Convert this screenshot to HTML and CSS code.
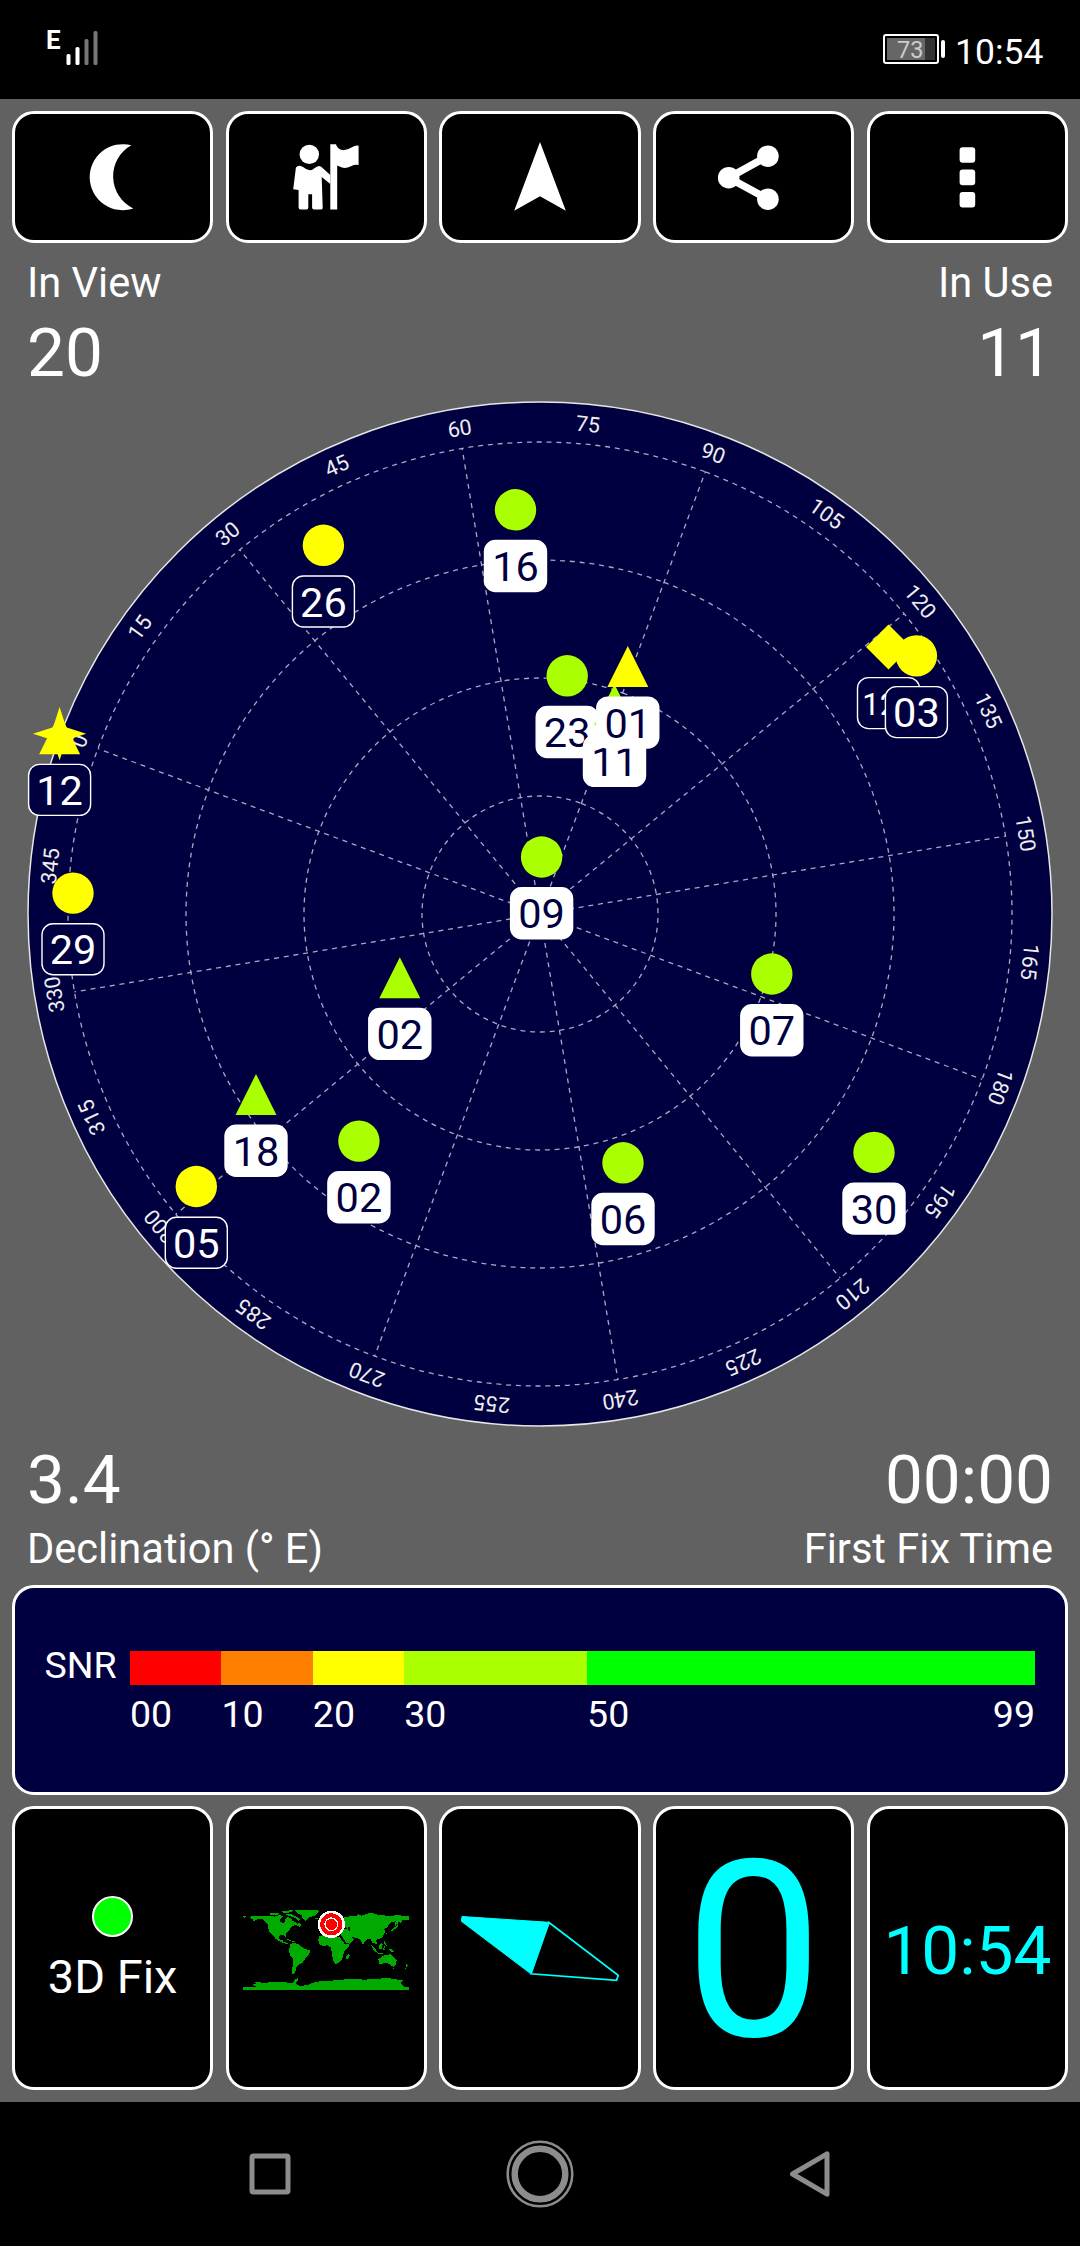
FILE: index.html
```html
<!DOCTYPE html>
<html lang="en">
<head>
  <meta charset="UTF-8">
  <meta name="viewport" content="width=device-width, initial-scale=1.0">
  <title>GPS Status</title>
  <link rel="stylesheet" href="styles.css">
</head>
<body>
  <div class="status-bar">
    <div class="network">
      <span class="network-type">E</span>
      <svg class="signal" width="32" height="36" viewBox="0 0 32 36">
        <rect x="0.5" y="23" width="4" height="11" rx="1.5" />
        <rect x="9.5" y="16" width="4" height="18" rx="1.5" />
        <rect class="off" x="18.5" y="8" width="4" height="26" rx="1.5" />
        <rect class="off" x="27.5" y="0" width="4" height="34" rx="1.5" />
      </svg>
    </div>
    <div class="system">
      <div class="battery"><span class="battery-level">73</span></div>
      <div class="battery-tip"></div>
      <span class="clock">10:54</span>
    </div>
  </div>

  <main class="app">
    <div class="toolbar">
      <button class="card">
        <svg class="icon" viewBox="0 0 80 80"><path d="M58.3 8.3 A33 33 0 1 0 60.3 71.4 A35.6 35.6 0 0 1 58.3 8.3Z" /></svg>
      </button>
      <button class="card">
        <svg class="icon" viewBox="0 0 80 80">
          <circle cx="23.3" cy="17.4" r="9.7" />
          <path d="M12 28.9 Q15 28.3 17.5 30.3 Q23.7 36 29.5 30.5 Q33.5 27.5 36 30.5 L44.3 37.9 V46.9 L35.7 39.9 L36.7 71 Q36.7 72.4 35 72.4 H28 Q26.1 72.4 26.1 70.5 V57.2 H22.3 V70.5 Q22.3 72.4 20.5 72.4 H14.5 Q12.6 72.4 12.6 70.5 V53 L7.2 52.3 L9.9 30.5Z" />
          <path d="M44.3 7.2 H50 Q51.2 12 56 13 Q60 13.8 66 10.2 Q69.5 8 72.6 8.8 V28 Q69 27.2 65 29.2 Q60 31.8 56 30.6 L51.2 28.4 V72.6 H44.3Z" />
        </svg>
      </button>
      <button class="card">
        <svg class="icon" viewBox="0 0 80 80"><path d="M40 5 L65.8 73.7 L40 59.3 L14.2 73.7Z" /></svg>
      </button>
      <button class="card">
        <svg class="icon" viewBox="0 0 80 80">
          <circle cx="53.9" cy="19.2" r="10.8" />
          <circle cx="14.7" cy="40.7" r="10.8" />
          <circle cx="53.9" cy="62.2" r="10.8" />
          <path class="share-line" d="M53.9 19.2 L14.7 40.7 L53.9 62.2" />
        </svg>
      </button>
      <button class="card">
        <svg class="icon" viewBox="0 0 80 80">
          <rect x="32.6" y="10.2" width="15.6" height="15.6" rx="3" />
          <rect x="32.6" y="32.6" width="15.6" height="15.6" rx="3" />
          <rect x="32.6" y="55" width="15.6" height="15.6" rx="3" />
        </svg>
      </button>
    </div>

    <div class="stats stats-top">
      <div class="stat">
        <div class="stat-label">In View</div>
        <div class="stat-value">20</div>
      </div>
      <div class="stat right">
        <div class="stat-label">In Use</div>
        <div class="stat-value">11</div>
      </div>
    </div>

    <!-- Sky plot, origin in the centre of the radar -->
    <svg class="radar" viewBox="-540 -522 1080 1044">
      <circle class="sky" r="512" />
      <g class="grid" transform="rotate(-69.5)">
        <circle r="118" />
        <circle r="236" />
        <circle r="354" />
        <circle r="472" />
        <path d="M0 0V-472" />
        <path d="M0 0V-472" transform="rotate(30)" />
        <path d="M0 0V-472" transform="rotate(60)" />
        <path d="M0 0V-472" transform="rotate(90)" />
        <path d="M0 0V-472" transform="rotate(120)" />
        <path d="M0 0V-472" transform="rotate(150)" />
        <path d="M0 0V-472" transform="rotate(180)" />
        <path d="M0 0V-472" transform="rotate(210)" />
        <path d="M0 0V-472" transform="rotate(240)" />
        <path d="M0 0V-472" transform="rotate(270)" />
        <path d="M0 0V-472" transform="rotate(300)" />
        <path d="M0 0V-472" transform="rotate(330)" />
      </g>
      <g class="degrees" transform="rotate(-69.4)">
        <text y="-484.7">0</text>
        <text y="-484.7" transform="rotate(15)">15</text>
        <text y="-484.7" transform="rotate(30)">30</text>
        <text y="-484.7" transform="rotate(45)">45</text>
        <text y="-484.7" transform="rotate(60)">60</text>
        <text y="-484.7" transform="rotate(75)">75</text>
        <text y="-484.7" transform="rotate(90)">90</text>
        <text y="-484.7" transform="rotate(105)">105</text>
        <text y="-484.7" transform="rotate(120)">120</text>
        <text y="-484.7" transform="rotate(135)">135</text>
        <text y="-484.7" transform="rotate(150)">150</text>
        <text y="-484.7" transform="rotate(165)">165</text>
        <text y="-484.7" transform="rotate(180)">180</text>
        <text y="-484.7" transform="rotate(195)">195</text>
        <text y="-484.7" transform="rotate(210)">210</text>
        <text y="-484.7" transform="rotate(225)">225</text>
        <text y="-484.7" transform="rotate(240)">240</text>
        <text y="-484.7" transform="rotate(255)">255</text>
        <text y="-484.7" transform="rotate(270)">270</text>
        <text y="-484.7" transform="rotate(285)">285</text>
        <text y="-484.7" transform="rotate(300)">300</text>
        <text y="-484.7" transform="rotate(315)">315</text>
        <text y="-484.7" transform="rotate(330)">330</text>
        <text y="-484.7" transform="rotate(345)">345</text>
      </g>

      <g class="sat used" transform="translate(-24.5 -404.2)">
        <circle class="good" r="20.7" />
        <rect x="-31" y="30.7" width="62" height="51" rx="11" />
        <text y="71.4">16</text>
      </g>
      <g class="sat" transform="translate(-216.6 -368.7)">
        <circle class="weak" r="20.7" />
        <rect x="-31" y="30.7" width="62" height="51" rx="11" />
        <text y="71.4">26</text>
      </g>
      <g class="sat" transform="translate(-480.4 -180.3)">
        <path class="weak" d="M0 -20.5 L20.5 20.5 H-20.5Z" />
        <path class="weak" d="M0 -26.6 L6.5 -6.5 L26.6 0 L6.5 6.5 L0 26.6 L-6.5 6.5 L-26.6 0 L-6.5 -6.5Z" />
        <rect x="-31" y="30.7" width="62" height="51" rx="11" />
        <text y="71.4">12</text>
      </g>
      <g class="sat" transform="translate(-467 -20.9)">
        <circle class="weak" r="20.7" />
        <rect x="-31" y="30.7" width="62" height="51" rx="11" />
        <text y="71.4">29</text>
      </g>
      <g class="sat" transform="translate(348.5 -267.1)">
        <path class="weak" d="M0 -22.5 L22.5 0 L0 22.5 L-22.5 0Z" />
        <rect x="-31" y="30.7" width="62" height="51" rx="11" />
        <text class="long" y="68.5">123</text>
      </g>
      <g class="sat" transform="translate(376.4 -258.1)">
        <circle class="weak" r="20.7" />
        <rect x="-31" y="30.7" width="62" height="51" rx="11" />
        <text y="71.4">03</text>
      </g>
      <g class="sat used" transform="translate(27.2 -238.2)">
        <circle class="good" r="20.7" />
        <rect x="-31" y="30.7" width="62" height="51" rx="11" />
        <text y="71.4">23</text>
      </g>
      <g class="sat used" transform="translate(74.5 -209.3)">
        <path class="good" d="M0 -20.5 L20.5 20.5 H-20.5Z" />
        <rect x="-31" y="30.7" width="62" height="51" rx="11" />
        <text y="71.4">11</text>
      </g>
      <g class="sat used" transform="translate(87.8 -247.6)">
        <path class="weak" d="M0 -20.5 L20.5 20.5 H-20.5Z" />
        <rect x="-31" y="30.7" width="62" height="51" rx="11" />
        <text y="71.4">01</text>
      </g>
      <g class="sat used" transform="translate(1.6 -57)">
        <circle class="good" r="20.7" />
        <rect x="-31" y="30.7" width="62" height="51" rx="11" />
        <text y="71.4">09</text>
      </g>
      <g class="sat used" transform="translate(231.8 60)">
        <circle class="good" r="20.7" />
        <rect x="-31" y="30.7" width="62" height="51" rx="11" />
        <text y="71.4">07</text>
      </g>
      <g class="sat used" transform="translate(83 248.8)">
        <circle class="good" r="20.7" />
        <rect x="-31" y="30.7" width="62" height="51" rx="11" />
        <text y="71.4">06</text>
      </g>
      <g class="sat used" transform="translate(334 238.4)">
        <circle class="good" r="20.7" />
        <rect x="-31" y="30.7" width="62" height="51" rx="11" />
        <text y="71.4">30</text>
      </g>
      <g class="sat used" transform="translate(-140.2 63.7)">
        <path class="good" d="M0 -20.5 L20.5 20.5 H-20.5Z" />
        <rect x="-31" y="30.7" width="62" height="51" rx="11" />
        <text y="71.4">02</text>
      </g>
      <g class="sat used" transform="translate(-284 180.6)">
        <path class="good" d="M0 -20.5 L20.5 20.5 H-20.5Z" />
        <rect x="-31" y="30.7" width="62" height="51" rx="11" />
        <text y="71.4">18</text>
      </g>
      <g class="sat used" transform="translate(-181.1 227.1)">
        <circle class="good" r="20.7" />
        <rect x="-31" y="30.7" width="62" height="51" rx="11" />
        <text y="71.4">02</text>
      </g>
      <g class="sat" transform="translate(-343.7 272.5)">
        <circle class="weak" r="20.7" />
        <rect x="-31" y="30.7" width="62" height="51" rx="11" />
        <text y="71.4">05</text>
      </g>
    </svg>

    <div class="stats stats-bottom">
      <div class="stat">
        <div class="stat-value">3.4</div>
        <div class="stat-label">Declination (° E)</div>
      </div>
      <div class="stat right">
        <div class="stat-value">00:00</div>
        <div class="stat-label">First Fix Time</div>
      </div>
    </div>

    <div class="snr-panel">
      <div class="snr-title">SNR</div>
      <div class="snr-scale">
        <div class="snr-row snr-bar">
          <div class="red"></div>
          <div class="orange"></div>
          <div class="yellow"></div>
          <div class="lime"></div>
          <div class="green"></div>
        </div>
        <div class="snr-row snr-labels">
          <span>00</span>
          <span>10</span>
          <span>20</span>
          <span>30</span>
          <div class="snr-last"><span>50</span><span>99</span></div>
        </div>
      </div>
    </div>

    <div class="pages">
      <button class="card fix">
        <span class="fix-dot"></span>
        <span class="fix-text">3D Fix</span>
      </button>
      <button class="card">
        <svg class="map" width="166" height="80" viewBox="40 60 498 240">
          <path class="land" d="M63 78 L78 79 L120 77 L135 80 L148 75 L162 78 L152 86 L150 95 L160 99 L166 94 L166 87 L174 81 L184 84 L188 92 L198 96 L202 103 L190 108 L182 115 L177 124 L168 131 L168 140 L162 135 L150 136 L146 144 L151 150 L158 148 L160 154 L168 157 L178 162 L172 163 L158 158 L147 152 L138 147 L130 136 L120 126 L115 115 L116 105 L108 95 L98 88 L85 87 L67 95 L70 89 L62 85Z" />
          <path class="land" d="M195 61 L262 60 L268 65 L258 76 L240 82 L228 93 L219 85 L216 76 L204 70Z" />
          <path class="land" d="M118 71 L135 68 L150 70 L142 75 L124 76Z M150 66 L165 63 L192 60 L186 66 L168 69Z M165 71 L184 72 L200 80 L213 88 L206 92 L196 84 L178 78Z M205 98 L216 104 L210 111 L202 107Z M254 84 H265 V88 H256Z M40 77 L52 80 L44 84Z" />
          <path class="land" d="M166 146 L178 148 L186 152 L178 152Z M188 152 H197 V155 H188Z" />
          <path class="land" d="M182 163 L194 158 L208 164 L222 175 L242 182 L238 195 L227 205 L220 217 L205 226 L198 236 L197 250 L188 251 L187 238 L190 222 L190 206 L181 196 L178 182Z" />
          <path class="land" d="M268 138 L292 134 L305 140 L331 142 L338 153 L346 163 L360 160 L356 171 L343 183 L340 203 L330 217 L320 222 L313 218 L308 200 L306 184 L303 172 L294 166 L280 168 L270 162 L266 150Z" />
          <path class="land" d="M358 191 L360 196 L355 209 L349 207 L350 198Z" />
          <path class="land" d="M335 84 L360 79 L378 79 L386 72 L394 77 L410 72 L424 68 L438 72 L450 76 L480 77 L510 76 L537 79 V89 L520 90 L512 94 L502 99 L497 108 L494 102 L499 94 L485 96 L479 103 L472 112 L464 118 L466 126 L458 141 L447 148 L437 149 L442 158 L440 165 L434 160 L428 158 L424 149 L415 145 L408 151 L402 160 L401 167 L396 158 L391 147 L377 144 L364 139 L374 148 L362 158 L350 160 L343 148 L336 138 L330 120Z" />
          <path class="sea" d="M356 110 L362 113 L360 124 L354 118Z M345 111 L352 113 L350 117 L343 116Z" />
          <path class="land" d="M484 121 L492 113 L500 109 L503 99 L506 101 L504 110 L496 117 L486 124Z M512 91 L517 96 L511 101Z M470 127 L473 131 L470 134Z" />
          <path class="land" d="M424 164 L434 173 L443 186 L437 186 L428 174Z M447 166 L456 158 L459 164 L455 179 L447 176Z M443 187 L460 190 L459 193 L443 190Z M462 169 L470 170 L464 174 L466 182 L461 180Z M462 152 L466 154 L472 168 L465 164Z M475 176 L488 179 L498 188 L484 186Z" />
          <path class="land" d="M446 207 L456 201 L466 194 L476 196 L482 190 L491 200 L501 210 L499 222 L491 231 L482 225 L472 218 L458 221 L448 222Z M489 233 H494 V236 H489Z" />
          <path class="land" d="M528 221 L535 228 L530 232Z M529 231 L522 239 L527 238Z" />
          <path class="land" d="M40 291 H84 L78 289 L68 284 L80 282 L77 277 L110 278 L138 275 L165 277 L190 279 L195 270 L206 262 L206 272 L198 280 L210 288 L235 285 L255 276 L290 272 L335 271 L350 267 L390 266 L400 270 L430 266 L480 265 L524 272 L514 276 L516 284 L524 290 L537 291 V299 H40Z" />
          <circle class="target-white" cx="305" cy="103" r="41" />
          <circle class="target-red" cx="305" cy="103" r="33" />
          <circle class="target-white" cx="305" cy="103" r="21" />
          <circle class="target-red" cx="305" cy="103" r="17" />
        </svg>
      </button>
      <button class="card">
        <svg class="compass" width="160" height="70" viewBox="0 0 160 70">
          <path class="needle-fill" d="M2 3.5 L89 9.3 L70.5 60.5 L1.4 8.3Z" />
          <path class="needle-line" d="M89 9.5 L158.2 62.3 L156.6 67.3 L71 60.8Z" />
        </svg>
      </button>
      <button class="card speed">0</button>
      <button class="card time">10:54</button>
    </div>
  </main>

  <nav class="nav-bar">
    <svg width="70" height="70" viewBox="0 0 70 70"><rect class="nav-icon" x="17" y="17" width="36" height="36" rx="1.5" /></svg>
    <svg width="70" height="70" viewBox="0 0 70 70">
      <circle class="nav-icon thin" cx="35" cy="35" r="32.3" />
      <circle class="nav-icon thick" cx="35" cy="35" r="25.3" />
    </svg>
    <svg width="70" height="70" viewBox="0 0 70 70"><path class="nav-icon" d="M52 14.8 V55.2 L17.5 35Z" /></svg>
  </nav>
</body>
</html>
```

FILE: styles.css
```css
/* Global Styles */
* {
  margin: 0;
  padding: 0;
  box-sizing: border-box;
  font-family: Roboto, "Liberation Sans", sans-serif;
}

body {
  width: 1080px;
  background: #000;
  color: #fff;
}

/* Android status bar */
.status-bar {
  display: flex;
  justify-content: space-between;
  height: 99px;
  padding: 0 35px 0 46px;
}

.network {
  display: flex;
  padding-top: 24px;
}

.network-type {
  width: 20px;
  font-size: 26px;
  font-weight: bold;
  line-height: 33px;
}

.signal {
  margin-top: 7px;
  fill: #fff;
}

.signal .off {
  fill: #777;
}

.system {
  display: flex;
  align-items: center;
  height: 98px;
}

.battery {
  width: 56px;
  height: 30px;
  padding: 2px;
  border: 2px solid #fff;
  border-radius: 3px;
}

.battery-level {
  display: block;
  height: 22px;
  padding-left: 10px;
  background: linear-gradient(to right, #666 79%, #333 79%);
  color: #ccc;
  font-size: 23.5px;
  line-height: 24px;
}

.battery-tip {
  width: 4px;
  height: 18px;
  margin: 0 10px 0 2px;
  border-radius: 2px;
  background: #fff;
}

.clock {
  width: 90px;
  font-size: 35.5px;
  line-height: 40px;
  padding-top: 6px;
}

/* App */
.app {
  height: 2003px;
  padding: 12px 0;
  background: #616161;
}

.toolbar,
.pages {
  display: grid;
  grid-template-columns: repeat(5, 1fr);
  gap: 12.6px;
  padding: 0 12px;
}

.card {
  display: flex;
  justify-content: center;
  align-items: center;
  min-width: 0;
  height: 132px;
  background: #000;
  color: #00ffff;
  border: 3px solid #fff;
  border-radius: 22px;
}

.icon {
  width: 80px;
  height: 80px;
  fill: #fff;
}

.share-line {
  fill: none;
  stroke: #fff;
  stroke-width: 7.5;
}

.stats {
  display: flex;
  justify-content: space-between;
  padding: 0 27px;
}

.stats-top {
  padding-top: 10px;
}

.right {
  text-align: right;
}

.stat-label {
  font-size: 41.6px;
  line-height: 60px;
}

.stat-value {
  font-size: 67.5px;
  line-height: 79px;
}

.stats-bottom .stat-value {
  line-height: 88px;
}

.stats-bottom .stat-label {
  line-height: 50px;
}

/* Radar */
.radar {
  display: block;
  width: 1080px;
  height: 1044px;
}

.sky {
  fill: #000040;
  stroke: #e6e6e6;
  stroke-width: 1.5;
}

.grid {
  fill: none;
  stroke: #a8a8be;
  stroke-width: 1.3;
  stroke-dasharray: 5 4.8;
}

.degrees {
  fill: #eee;
  font-size: 21.5px;
  text-anchor: middle;
}

.good {
  fill: #aaff00;
}

.weak {
  fill: #ffff00;
}

.sat rect {
  fill: #000040;
  stroke: #fff;
  stroke-width: 1.4;
}

.sat text {
  fill: #fff;
  font-size: 41.5px;
  text-anchor: middle;
}

.sat .long {
  font-size: 31px;
}

.sat.used rect {
  fill: #fff;
}

.sat.used text {
  fill: #000040;
}

/* Signal strength legend */
.snr-panel {
  display: flex;
  height: 210px;
  margin: 11px 12px 11px;
  padding: 63px 30px 0 29.5px;
  background: #000040;
  border: 3px solid #fff;
  border-radius: 22px;
  font-size: 37.5px;
}

.snr-title {
  width: 85.5px;
  line-height: 29px;
}

.snr-scale {
  flex: 1;
}

.snr-row {
  display: grid;
  grid-template-columns: 10fr 10fr 10fr 20fr 49fr;
}

.snr-bar {
  height: 34px;
}

.snr-labels {
  line-height: 59px;
}

.snr-last {
  display: flex;
  justify-content: space-between;
}

.red {
  background: #ff0000;
}

.orange {
  background: #ff8000;
}

.yellow {
  background: #ffff00;
}

.lime {
  background: #aaff00;
}

.green {
  background: #00ff00;
}

/* Bottom page buttons */
.pages .card {
  height: 284px;
}

.pages .fix {
  flex-direction: column;
  color: #fff;
  font-size: 47px;
}

.fix-dot {
  width: 41px;
  height: 41px;
  margin-top: 6px;
  background: #00ff00;
  border: 2px solid #fff;
  border-radius: 50%;
}

.fix-text {
  margin-top: 11px;
  line-height: 58px;
}

.map {
  margin-top: 3px;
  shape-rendering: crispEdges;
}

.land {
  fill: #00aa00;
}

.sea {
  fill: #000;
}

.target-white {
  fill: #fff;
}

.target-red {
  fill: #ff0000;
}

.needle-fill {
  fill: #00ffff;
  stroke: #00ffff;
}

.needle-line {
  fill: none;
  stroke: #00ffff;
  stroke-width: 1.8;
}

.pages .speed {
  padding-top: 7px;
  font-size: 246px;
}

.pages .time {
  padding-top: 4px;
  font-size: 67.5px;
}

/* Android navigation */
.nav-bar {
  display: grid;
  grid-template-columns: repeat(3, 1fr);
  place-items: center;
  height: 144px;
  padding: 0 135px;
}

.nav-icon {
  fill: none;
  stroke: #8c8c8c;
  stroke-width: 5;
  stroke-linejoin: round;
}

.thin {
  stroke-width: 2.5;
}

.thick {
  stroke-width: 6.5;
}
```
